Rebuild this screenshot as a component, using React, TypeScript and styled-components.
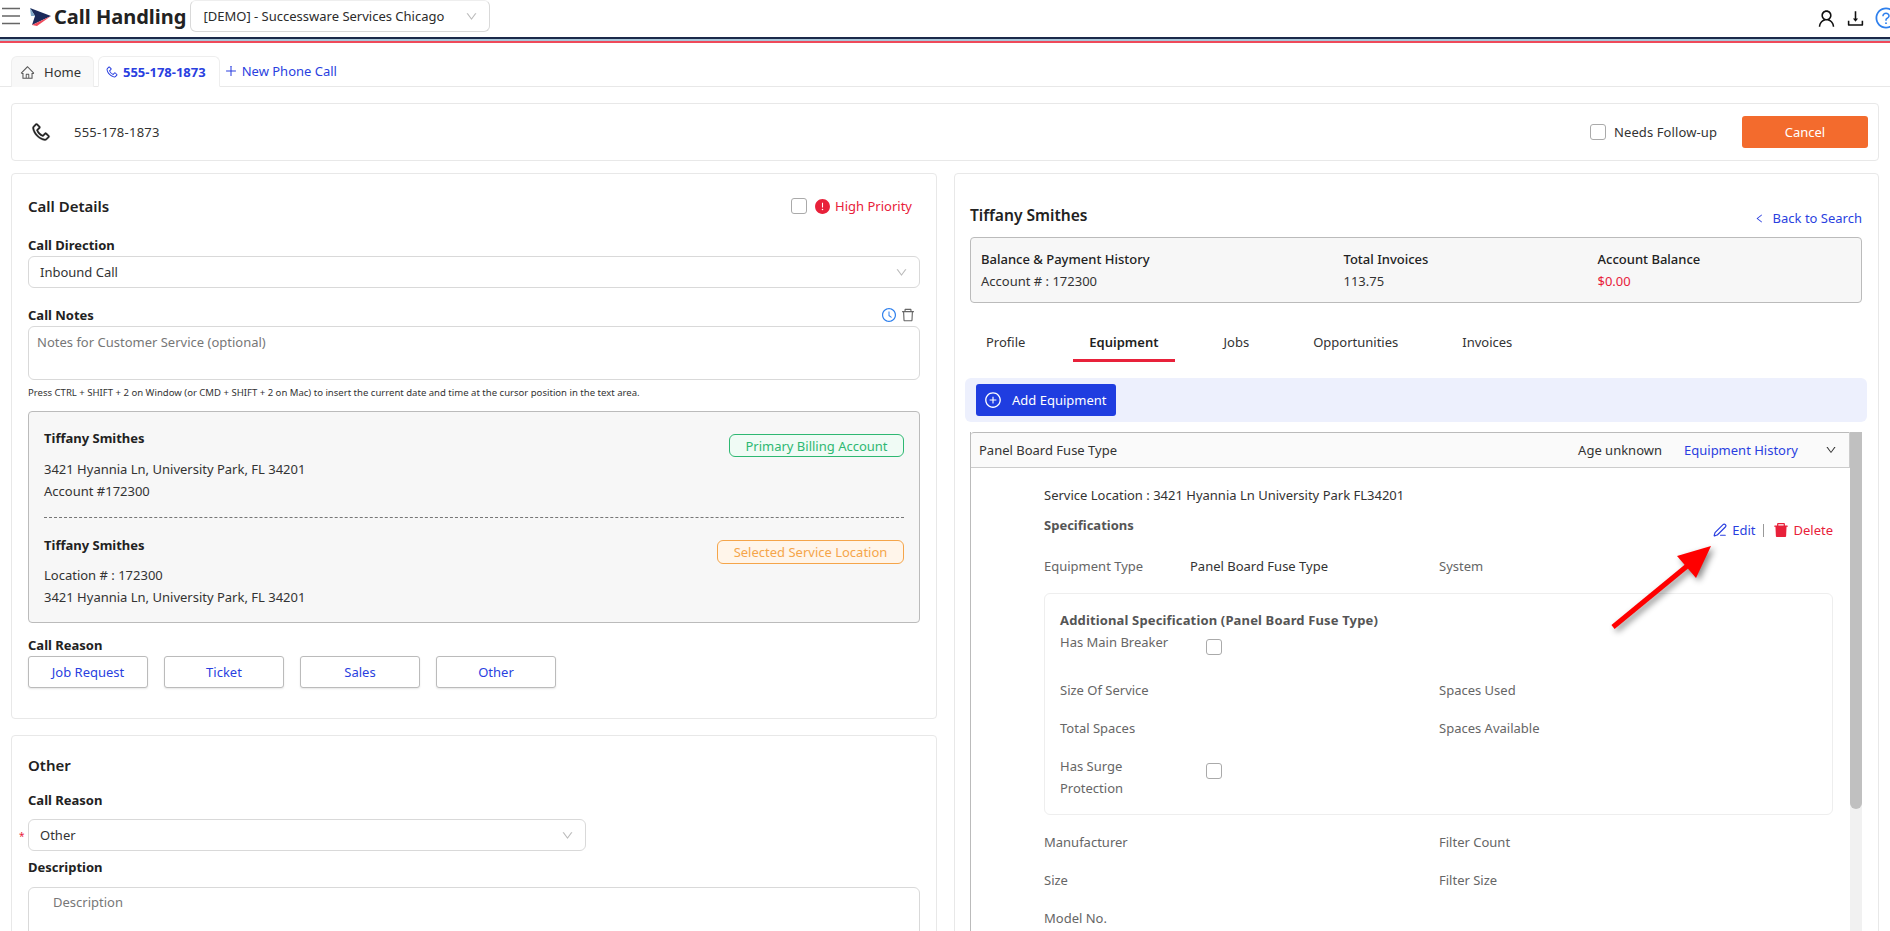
import React from "react";
import styled, { createGlobalStyle } from "styled-components";
import {
  AiOutlineHome, AiOutlinePlus, AiOutlineUser, AiOutlineDownload,
  AiOutlineQuestionCircle, AiOutlineClockCircle, AiOutlineDelete, AiFillDelete,
  AiFillExclamationCircle, AiOutlinePlusCircle, AiOutlineDown, AiOutlineLeft, AiOutlinePhone,
} from "react-icons/ai";
import { PenLine } from "lucide-react";

const blue = "#2a3fe0";
const red = "#e8213a";

const Global = createGlobalStyle`
  html, body { margin: 0; padding: 0; background: #fff; height: 100%; overflow: hidden; }
  body { font-family: "Noto Sans", "Open Sans", sans-serif; font-size: 13px; color: #2b2b2b; }
  * { box-sizing: border-box; }
`;

const Page = styled.div`position: relative; width: 1890px; height: 931px; overflow: hidden;`;

const Header = styled.header`display: flex; align-items: flex-start; height: 37px; padding-left: 2px;`;
const MenuIcon = styled.svg`width: 18px; height: 18px; margin-top: 7px; flex: none; color: #666;`;
const Logo = styled.svg`width: 21px; height: 18px; margin: 8px 0 0 10px; flex: none;`;
const AppTitle = styled.h1`margin: 5px 0 0 3px; font-size: 20px; line-height: 24px; font-weight: 700; color: #222; white-space: nowrap;`;
const CompanySelect = styled.div`
  display: flex; align-items: center; justify-content: space-between;
  width: 300px; height: 32px; margin-left: 4px; padding: 0 11px 0 12px;
  border: 1px solid #d9d9d9; border-top-color: #eee; border-radius: 6px; white-space: nowrap;
`;
const HeaderIcons = styled.div`display: flex; align-items: center; gap: 8px; margin: 6px -8px 0 auto; font-size: 21px; color: #111;`;
const HelpIcon = styled(AiOutlineQuestionCircle)`color: #2f80ed; font-size: 24px;`;
const Stripes = styled.div`height: 6px; background: linear-gradient(#1b2a4a 0 2px, #a8c6d8 2px 4px, #ef4a5a 4px 6px);`;

const TabStrip = styled.nav`display: flex; align-items: flex-end; height: 44px; padding: 12.5px 0 0 11px; border-bottom: 1px solid #e8e8e8;`;
const PageTab = styled.div<{ $active?: boolean }>`
  display: flex; align-items: center; height: 31px; padding: ${p => (p.$active ? "0 13px 0 6px" : "0 12px 0 8px")};
  margin-right: 4px;
  border: 1px solid #eee; border-bottom: ${p => (p.$active ? "1px solid #fff" : "none")}; border-radius: 6px 6px 0 0;
  background: ${p => (p.$active ? "#fff" : "#f8f8f8")};
  margin-bottom: -1px; white-space: nowrap;
`;
const HomeLabel = styled.span`margin-left: 9px; color: #333;`;
const PhoneTabIcon = styled(AiOutlinePhone)`color: ${blue}; font-size: 14px; transform: scaleX(-1);`;
const PhoneTabLabel = styled.span`margin-left: 4px; color: ${blue}; font-weight: 700;`;
const NewCall = styled.div`display: flex; align-items: center; height: 31px; color: ${blue}; white-space: nowrap; gap: 4px;`;

const CallBar = styled.section`
  display: flex; align-items: center; height: 58px; margin: 16px 11px 0; padding: 0 10px 0 18px;
  border: 1px solid #e8e8e8; border-radius: 4px;
`;
const BarPhone = styled(AiOutlinePhone)`font-size: 22px; color: #222; transform: scaleX(-1); stroke: currentColor; stroke-width: 16;`;
const BarNumber = styled.span`margin-left: 22px; color: #333; letter-spacing: 0.25px;`;
const Spacer = styled.div`flex: 1;`;
const Check = styled.span`display: block; flex: none; width: 16px; height: 16px; border: 1px solid #aaa; border-radius: 3px; background: #fff;`;
const FollowLabel = styled.span`margin: 0 25px 0 8px; color: #333; white-space: nowrap; letter-spacing: 0.1px;`;
const CancelButton = styled.button`
  width: 126px; height: 32px; border: 0; border-radius: 3px; background: #f36b2d; color: #fff;
  font: inherit; padding: 0;
`;

const Columns = styled.main`display: grid; grid-template-columns: 926px 925px; column-gap: 17px; margin: 12px 11px 0;`;
const LeftColumn = styled.div`display: flex; flex-direction: column; gap: 16px;`;
const Card = styled.section`border: 1px solid #e8e8e8; border-radius: 4px; background: #fff;`;
const CallCard = styled(Card)`padding: 22px 16px 30px;`;
const OtherCard = styled(Card)`padding: 19px 16px 0; height: 300px;`;
const CustomerCard = styled(Card)`padding: 31px 16px 0 15px; height: 900px;`;

const TitleRow = styled.div`display: flex; align-items: center; height: 20px; margin-bottom: 19px;`;
const CardTitle = styled.h2`margin: 0; font-size: 15px; line-height: 20px; font-weight: 600; color: #222;`;
const CustomerName = styled(CardTitle)`font-size: 15.6px;`;
const OtherTitle = styled(CardTitle)`margin-bottom: 15px;`;
const PriorityIcon = styled(AiFillExclamationCircle)`margin: 0 4px 0 7px; font-size: 17px; color: ${red};`;
const PriorityLabel = styled.span`color: ${red}; margin-right: 8px;`;
const FieldLabel = styled.div<{ $mt?: number }>`
  display: flex; align-items: center; justify-content: space-between;
  height: 20px; margin-top: ${p => p.$mt ?? 0}px; font-weight: 700; color: #222; line-height: 20px;
`;
const NoteTools = styled.span`display: flex; align-items: center; gap: 3px; margin-right: 4px; font-size: 16px;`;
const ClockIcon = styled(AiOutlineClockCircle)`color: #2f80ed;`;
const TrashIcon = styled(AiOutlineDelete)`color: #666;`;
const SelectBox = styled.div<{ $short?: boolean; $mt?: number }>`
  position: relative; display: flex; align-items: center; justify-content: space-between;
  height: 32px; width: ${p => (p.$short ? "558px" : "auto")}; margin-top: ${p => p.$mt ?? 1}px;
  padding: 0 11px; border: 1px solid #d9d9d9; border-radius: 6px; color: #333;
`;
const Chevron = styled(AiOutlineDown)`color: #bbb; font-size: 13px;`;
const Required = styled.span`position: absolute; left: -10px; top: 9px; color: ${red}; font-size: 10px;`;
const TextBox = styled.div<{ $h: number; $pl: number; $mt: number; $pt: number }>`
  height: ${p => p.$h}px; margin-top: ${p => p.$mt}px; padding: ${p => p.$pt}px 0 0 ${p => p.$pl}px;
  border: 1px solid #d9d9d9; border-radius: 6px; color: #777; line-height: 18px;
`;
const Hint = styled.div`margin-top: 6px; height: 14px; font-size: 9.56px; line-height: 14px; color: #333; white-space: nowrap;`;

const AccountBox = styled.div`margin-top: 11px; height: 212px; padding: 15px 15px 0; background: #f7f7f7; border: 1px solid #bbb; border-radius: 4px;`;
const AccountSection = styled.div<{ $divided?: boolean }>`
  display: flex; justify-content: space-between; align-items: flex-start;
  padding-bottom: ${p => (p.$divided ? "15px" : "0")};
  padding-top: ${p => (p.$divided ? "0" : "16px")};
  border-bottom: ${p => (p.$divided ? "1px dashed #777" : "none")};
`;
const Line = styled.div<{ $mt?: number }>`line-height: 22px; height: 22px; margin-top: ${p => p.$mt ?? 0}px; color: #333; white-space: nowrap;`;
const Strong = styled(Line)`font-weight: 700; color: #222;`;
const Pill = styled.span<{ $tone: "green" | "orange" }>`
  display: flex; align-items: center; justify-content: center;
  height: ${p => (p.$tone === "green" ? 23 : 24)}px; width: ${p => (p.$tone === "green" ? 175 : 187)}px;
  margin-top: ${p => (p.$tone === "green" ? 7 : 6)}px; border-radius: 6px; white-space: nowrap;
  color: ${p => (p.$tone === "green" ? "#2eb872" : "#f5a54a")};
  background: ${p => (p.$tone === "green" ? "#f0fbf5" : "#fff5ea")};
  border: 1px solid ${p => (p.$tone === "green" ? "#2eb872" : "#f5a54a")};
`;
const ReasonRow = styled.div`display: flex; gap: 16px; margin-top: 1px;`;
const ReasonButton = styled.button`
  width: 120px; height: 32px; padding: 0; background: #fff; border: 1px solid #bbb; border-radius: 3px;
  box-shadow: 0 1px 2px rgba(0,0,0,.1); color: ${blue}; font: inherit;
`;

const NameRow = styled.div`display: flex; justify-content: space-between; height: 23px;`;
const BackLink = styled.span`display: flex; align-items: center; align-self: flex-end; gap: 8px; height: 20px; color: ${blue}; white-space: nowrap;`;
const BackIcon = styled(AiOutlineLeft)`font-size: 11px;`;
const BalanceBox = styled.div`
  display: grid; grid-template-columns: 362.5px 254px 1fr; grid-auto-rows: 22px;
  height: 66px; margin-top: 9px; padding: 10px 0 0 10px; line-height: 22px; color: #333;
  background: #f7f7f7; border: 1px solid #bbb; border-radius: 4px;
`;
const BalanceHead = styled.span`font-weight: 500; color: #222;`;
const Money = styled.span`color: ${red};`;
const Tabs = styled.div`display: flex; gap: 30px; height: 40px; margin: 19px 0 0 -1px;`;
const Tab = styled.div<{ $active?: boolean }>`
  display: flex; align-items: center; justify-content: center; height: 40px; padding: 2px 17px 0;
  ${p => p.$active && "padding: 2px 16px 0; margin: 0 2px 0 1px;"}
  font-weight: ${p => (p.$active ? 600 : 400)}; color: ${p => (p.$active ? "#222" : "#333")};
  border-bottom: 3px solid ${p => (p.$active ? red : "transparent")}; white-space: nowrap;
`;
const AddBar = styled.div`display: flex; align-items: center; height: 44px; margin: 16px -5px 0; padding-left: 11px; background: #edf0fd; border-radius: 6px;`;
const AddButton = styled.button`
  display: flex; align-items: center; gap: 10px; width: 140px; height: 32px; padding: 0 0 0 8px;
  background: #1f3de0; color: #fff; border: 0; border-radius: 3px; font: inherit;
`;
const AddIcon = styled(AiOutlinePlusCircle)`font-size: 18px;`;

const AccordionWrap = styled.div`display: flex; margin-top: 10px;`;
const Accordion = styled.div`width: 880px; border-left: 1px solid #bbb; height: 600px;`;
const AccordionHead = styled.div`
  display: flex; align-items: center; height: 36px; padding: 0 12px 0 8px; background: #fafafa; color: #333;
  border-top: 1px solid #bbb; border-right: 1px solid #ccc; border-bottom: 1px solid #ccc; border-radius: 3px 0 0 0; white-space: nowrap;
`;
const Age = styled.span`margin-left: auto; color: #333;`;
const HistoryLink = styled.span`margin-left: 22px; color: ${blue};`;
const HeadChevron = styled(AiOutlineDown)`margin-left: 27px; font-size: 12px; color: #333;`;
const AccordionBody = styled.div`padding: 16px 17px 0 73px;`;
const SpecRow = styled.div`display: flex; justify-content: space-between; height: 41px; margin-top: 8px;`;
const SpecTitle = styled.div`font-weight: 700; color: #555; line-height: 22px;`;
const Actions = styled.div`display: flex; align-items: center; height: 20px; margin-top: 6px; white-space: nowrap;`;
const EditLink = styled.span`display: flex; align-items: center; gap: 5px; color: ${blue};`;
const Divider = styled.span`width: 1px; height: 13px; margin: 0 8px 0 8px; background: #999;`;
const DeleteLink = styled.span`display: flex; align-items: center; gap: 3px; color: ${red};`;
const DeleteIcon = styled(AiFillDelete)`font-size: 18px;`;
const SpecGrid = styled.div<{ $cols: string }>`
  display: grid; grid-template-columns: ${p => p.$cols}; row-gap: 16px; line-height: 22px; color: #666;
`;
const Value = styled.span`color: #333;`;
const InnerBox = styled.div`margin: 16px 0; height: 222px; padding: 15px 15px 0; border: 1px solid #eee; border-radius: 6px;`;
const InnerTitle = styled.div`height: 22px; line-height: 22px; font-weight: 700; color: #555; letter-spacing: 0.15px;`;
const CheckCell = styled.div`display: flex; align-items: flex-start; min-height: 32px; color: #666; line-height: 22px;`;
const CheckLabel = styled.span`width: 146px; flex: none;`;
const NarrowLabel = styled.span`width: 100px; margin-right: 46px; flex: none;`;
const CellCheck = styled(Check)<{ $mt: number }>`margin-top: ${p => p.$mt}px;`;

const ScrollTrack = styled.div`width: 12px; height: 600px; background: #f1f1f1;`;
const ScrollThumb = styled.div`height: 377px; background: #c0c0c0; border-radius: 0 0 6px 6px;`;

const Callout = styled.svg`position: absolute; left: 1600px; top: 536px; width: 130px; height: 110px; overflow: visible; filter: drop-shadow(3px 3px 3px rgba(0,0,0,.45));`;

export default function App() {
  return (
    <Page>
      <Global />
      <Header>
        <MenuIcon viewBox="0 0 18 18">
          <path d="M0 1.5h18M0 9h18M0 16.5h18" stroke="currentColor" strokeWidth="1.7" fill="none" />
        </MenuIcon>
        <Logo viewBox="0 0 21 18">
          <polygon points="0,0 21,8 2,17 5,8" fill="#1b2a5a" />
          <polygon points="2,17 21,8 7,18" fill="#ef4a5a" />
          <polygon points="0,0 5,8 1,8" fill="#7fa8c8" />
        </Logo>
        <AppTitle>Call Handling</AppTitle>
        <CompanySelect>[DEMO] - Successware Services Chicago <Chevron /></CompanySelect>
        <HeaderIcons><AiOutlineUser /><AiOutlineDownload /><HelpIcon /></HeaderIcons>
      </Header>
      <Stripes />
      <TabStrip>
        <PageTab><AiOutlineHome size={15} color="#555" /><HomeLabel>Home</HomeLabel></PageTab>
        <PageTab $active><PhoneTabIcon /><PhoneTabLabel>555-178-1873</PhoneTabLabel></PageTab>
        <NewCall><AiOutlinePlus size={14} />New Phone Call</NewCall>
      </TabStrip>
      <CallBar>
        <BarPhone />
        <BarNumber>555-178-1873</BarNumber>
        <Spacer />
        <Check />
        <FollowLabel>Needs Follow-up</FollowLabel>
        <CancelButton>Cancel</CancelButton>
      </CallBar>
      <Columns>
        <LeftColumn>
          <CallCard>
            <TitleRow>
              <CardTitle>Call Details</CardTitle>
              <Spacer />
              <Check />
              <PriorityIcon />
              <PriorityLabel>High Priority</PriorityLabel>
            </TitleRow>
            <FieldLabel>Call Direction</FieldLabel>
            <SelectBox>Inbound Call <Chevron /></SelectBox>
            <FieldLabel $mt={17}>Call Notes<NoteTools><ClockIcon /><TrashIcon /></NoteTools></FieldLabel>
            <TextBox $h={54} $mt={1} $pl={8} $pt={6}>Notes for Customer Service (optional)</TextBox>
            <Hint>Press CTRL + SHIFT + 2 on Window (or CMD + SHIFT + 2 on Mac) to insert the current date and time at the cursor position in the text area.</Hint>
            <AccountBox>
              <AccountSection $divided>
                <div>
                  <Strong>Tiffany Smithes</Strong>
                  <Line $mt={9}>3421 Hyannia Ln, University Park, FL 34201</Line>
                  <Line>Account #172300</Line>
                </div>
                <Pill $tone="green">Primary Billing Account</Pill>
              </AccountSection>
              <AccountSection>
                <div>
                  <Strong>Tiffany Smithes</Strong>
                  <Line $mt={8}>Location # : 172300</Line>
                  <Line>3421 Hyannia Ln, University Park, FL 34201</Line>
                </div>
                <Pill $tone="orange">Selected Service Location</Pill>
              </AccountSection>
            </AccountBox>
            <FieldLabel $mt={12}>Call Reason</FieldLabel>
            <ReasonRow>
              <ReasonButton>Job Request</ReasonButton>
              <ReasonButton>Ticket</ReasonButton>
              <ReasonButton>Sales</ReasonButton>
              <ReasonButton>Other</ReasonButton>
            </ReasonRow>
          </CallCard>
          <OtherCard>
            <OtherTitle>Other</OtherTitle>
            <FieldLabel>Call Reason</FieldLabel>
            <SelectBox $short $mt={9}><Required>*</Required>Other <Chevron /></SelectBox>
            <FieldLabel $mt={6}>Description</FieldLabel>
            <TextBox $h={120} $mt={10} $pl={24} $pt={5}>Description</TextBox>
          </OtherCard>
        </LeftColumn>
        <CustomerCard>
          <NameRow>
            <CustomerName>Tiffany Smithes</CustomerName>
            <BackLink><BackIcon />Back to Search</BackLink>
          </NameRow>
          <BalanceBox>
            <BalanceHead>Balance &amp; Payment History</BalanceHead>
            <BalanceHead>Total Invoices</BalanceHead>
            <BalanceHead>Account Balance</BalanceHead>
            <span>Account # : 172300</span>
            <span>113.75</span>
            <Money>$0.00</Money>
          </BalanceBox>
          <Tabs>
            <Tab>Profile</Tab>
            <Tab $active>Equipment</Tab>
            <Tab>Jobs</Tab>
            <Tab>Opportunities</Tab>
            <Tab>Invoices</Tab>
          </Tabs>
          <AddBar><AddButton><AddIcon />Add Equipment</AddButton></AddBar>
          <AccordionWrap>
            <Accordion>
              <AccordionHead>
                Panel Board Fuse Type
                <Age>Age unknown</Age>
                <HistoryLink>Equipment History</HistoryLink>
                <HeadChevron />
              </AccordionHead>
              <AccordionBody>
                <Line>Service Location : 3421 Hyannia Ln University Park FL34201</Line>
                <SpecRow>
                  <SpecTitle>Specifications</SpecTitle>
                  <Actions>
                    <EditLink><PenLine size={14} strokeWidth={2} />Edit</EditLink>
                    <Divider />
                    <DeleteLink><DeleteIcon />Delete</DeleteLink>
                  </Actions>
                </SpecRow>
                <SpecGrid $cols="146px 249px 1fr">
                  <span>Equipment Type</span>
                  <Value>Panel Board Fuse Type</Value>
                  <span>System</span>
                </SpecGrid>
                <InnerBox>
                  <InnerTitle>Additional Specification (Panel Board Fuse Type)</InnerTitle>
                  <SpecGrid $cols="379px 1fr">
                    <CheckCell><CheckLabel>Has Main Breaker</CheckLabel><CellCheck $mt={8} /></CheckCell>
                    <span />
                    <span>Size Of Service</span>
                    <span>Spaces Used</span>
                    <span>Total Spaces</span>
                    <span>Spaces Available</span>
                    <CheckCell><NarrowLabel>Has Surge Protection</NarrowLabel><CellCheck $mt={8} /></CheckCell>
                    <span />
                  </SpecGrid>
                </InnerBox>
                <SpecGrid $cols="395px 1fr">
                  <span>Manufacturer</span>
                  <span>Filter Count</span>
                  <span>Size</span>
                  <span>Filter Size</span>
                  <span>Model No.</span>
                </SpecGrid>
              </AccordionBody>
            </Accordion>
            <ScrollTrack><ScrollThumb /></ScrollTrack>
          </AccordionWrap>
        </CustomerCard>
      </Columns>
      <Callout viewBox="0 0 130 110">
        <line x1="13" y1="91" x2="92" y2="26" stroke="#f00" strokeWidth="5" />
        <polygon points="111,10 77,20 96,42" fill="#f00" />
      </Callout>
    </Page>
  );
}
